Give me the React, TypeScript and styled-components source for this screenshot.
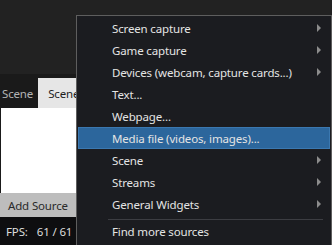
import React from "react";
import styled, { createGlobalStyle } from "styled-components";

const Global = createGlobalStyle`
  html, body { margin: 0; padding: 0; background: #1f1f1f; }
  body { font-family: "Noto Sans", "Open Sans", sans-serif; }
`;

const Window = styled.div`
  position: relative;
  width: 332px;
  height: 245px;
  overflow: hidden;
  display: flex;
  flex-direction: column;
  background: #1e1e1e;
  font-size: 11.5px;
  letter-spacing: -0.15px;
`;

const Preview = styled.div`
  height: 74px;
  background: #222222;
`;

const Dock = styled.div`
  flex: 1;
  display: flex;
  flex-direction: column;
  background: #1a1a1a;
  padding-top: 4px;
`;

const TabBar = styled.div`
  display: flex;
  height: 30px;
  align-items: stretch;
`;

const Tab = styled.div<{ $active?: boolean }>`
  display: flex;
  align-items: center;
  padding: 0 ${(p) => (p.$active ? "10px" : "5px")} 0 ${(p) => (p.$active ? "10px" : "2px")};
  background: ${(p) => (p.$active ? "#e6e6e6" : "transparent")};
  color: ${(p) => (p.$active ? "#1e1e1e" : "#b4b4b4")};
  white-space: nowrap;
`;

const ListPanel = styled.div`
  height: 85px;
  margin-left: 1px;
  background: #ffffff;
`;

const AddSource = styled.div`
  height: 24px;
  display: flex;
  align-items: center;
  padding-left: 8px;
  background: #bdbdbd;
  color: #2a2a2a;
`;

const StatusBar = styled.div`
  flex: 1;
  display: flex;
  align-items: center;
  gap: 9px;
  padding-left: 6px;
  background: #0e0e10;
  color: #dcdcdc;
`;

const Menu = styled.div`
  position: absolute;
  left: 76px;
  top: 15px;
  width: 254px;
  height: 240px;
  background: #1b1c20;
  border: 1px solid #5e5e5e;
  padding-top: 1px;
  color: #e4e4e4;
`;

const Item = styled.div<{ $selected?: boolean }>`
  position: relative;
  height: 22px;
  margin: 0 1px;
  padding-left: 34px;
  display: flex;
  align-items: center;
  box-sizing: border-box;
  white-space: nowrap;
  background: ${(p) => (p.$selected ? "#2c669c" : "transparent")};
  box-shadow: ${(p) => (p.$selected ? "inset 0 0 0 1px #3b78b0" : "none")};
`;

const Arrow = styled.span`
  position: absolute;
  right: 9px;
  top: 7px;
  width: 0;
  height: 0;
  border-top: 4px solid transparent;
  border-bottom: 4px solid transparent;
  border-left: 4px solid #8c8c8c;
`;

const Separator = styled.div`
  height: 1px;
  margin: 4px 8px 0 31px;
  background: #3c3d42;
`;

const items: { label: string; sub?: boolean; selected?: boolean }[] = [
  { label: "Screen capture", sub: true },
  { label: "Game capture", sub: true },
  { label: "Devices (webcam, capture cards...)", sub: true },
  { label: "Text..." },
  { label: "Webpage..." },
  { label: "Media file (videos, images)...", selected: true },
  { label: "Scene", sub: true },
  { label: "Streams", sub: true },
  { label: "General Widgets", sub: true },
];

export default function App() {
  return (
    <>
      <Global />
      <Window>
        <Preview />
        <Dock>
          <TabBar>
            <Tab>Scene</Tab>
            <Tab $active>Scene</Tab>
          </TabBar>
          <ListPanel />
          <AddSource>Add Source</AddSource>
          <StatusBar>
            <span>FPS:</span>
            <span>61 / 61</span>
          </StatusBar>
        </Dock>
        <Menu>
          {items.map((it) => (
            <Item key={it.label} $selected={it.selected}>
              {it.label}
              {it.sub && <Arrow />}
            </Item>
          ))}
          <Separator />
          <Item>Find more sources</Item>
        </Menu>
      </Window>
    </>
  );
}
